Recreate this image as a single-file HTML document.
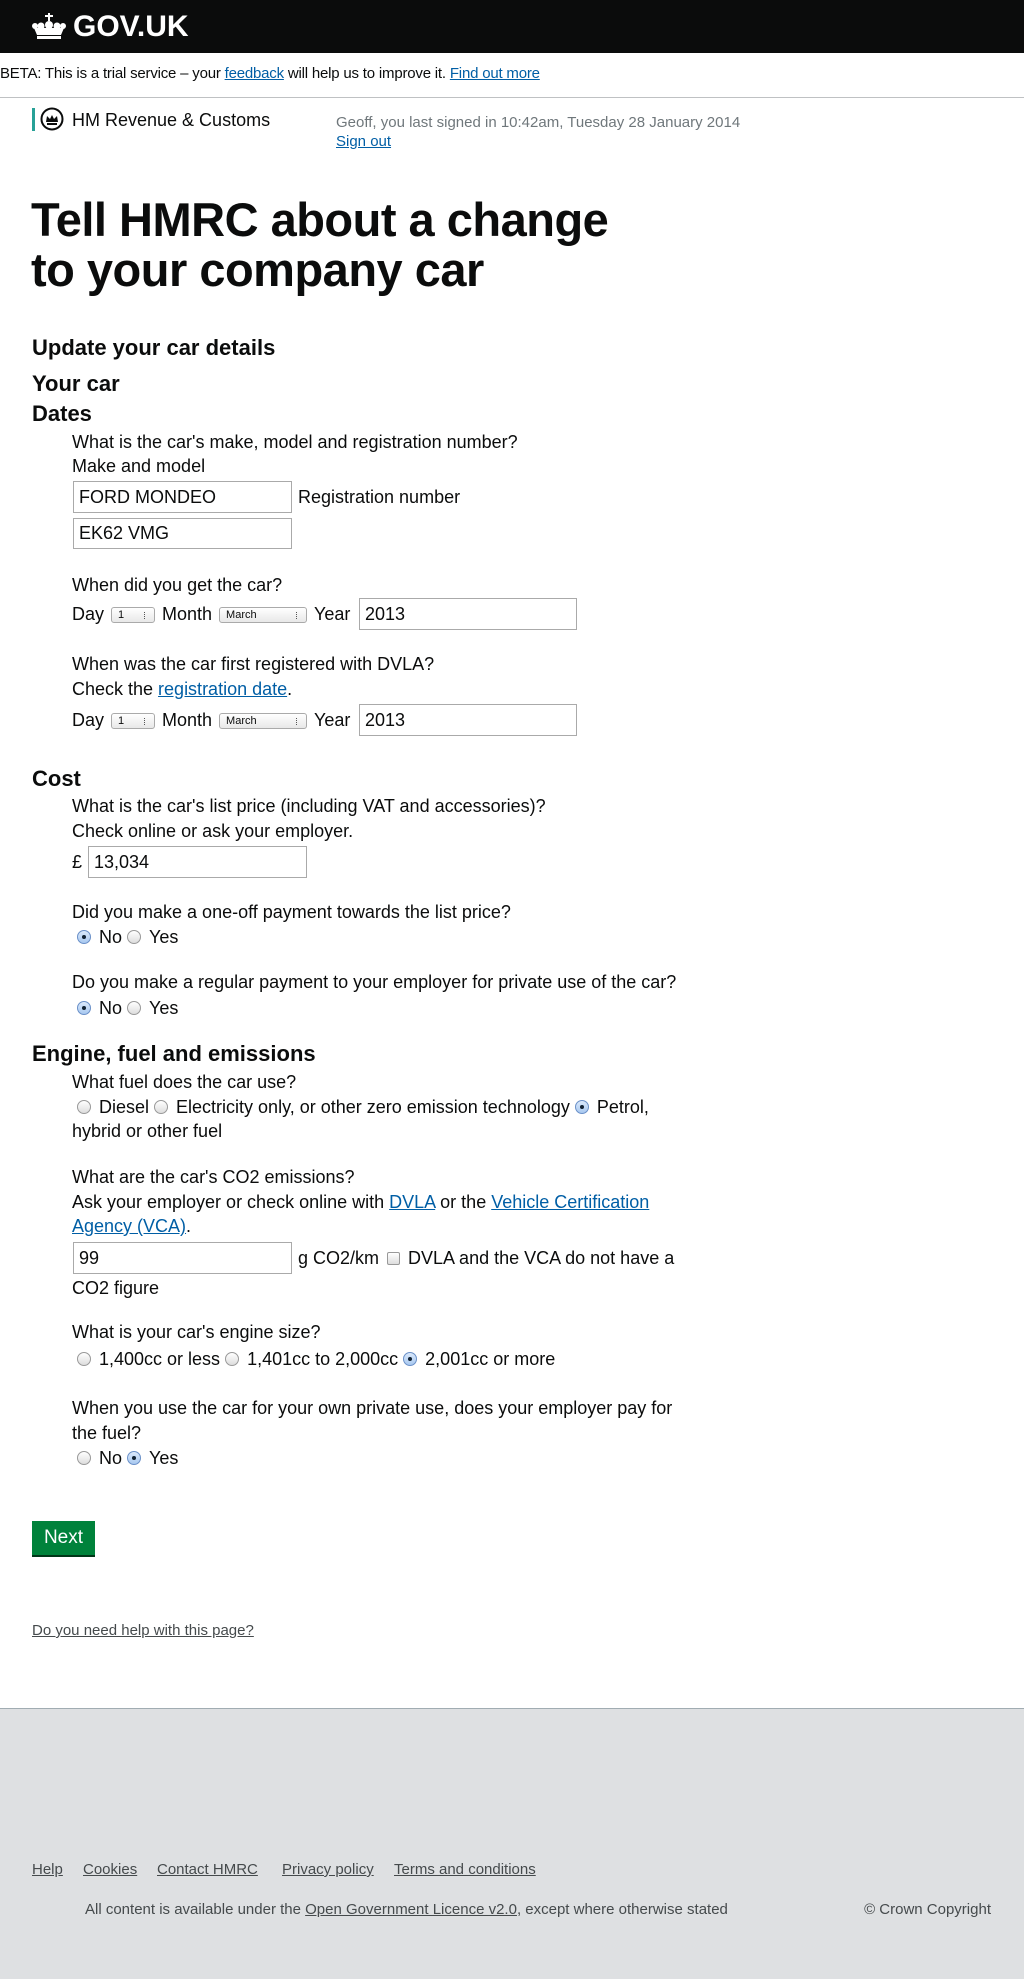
<!DOCTYPE html>
<html><head><meta charset="utf-8">
<style>
*{margin:0;padding:0;box-sizing:border-box}
body{width:1024px;height:1979px;position:relative;background:#fff;font-family:"Liberation Sans",sans-serif;color:#0b0c0c;font-size:18px;overflow:hidden}
.a{position:absolute;white-space:nowrap;line-height:25px}
a{color:#005ea5;text-decoration:underline}
.h2{font-weight:bold;font-size:22px}
.in{position:absolute;border:1px solid #aaa;background:#fff;font-size:18px;padding:0 5px;display:flex;align-items:center}
.sel{display:inline-block;vertical-align:middle;border:1px solid #aaa;border-radius:3px;background:linear-gradient(#fff,#e8e8e8);font-size:11px;height:16px;line-height:14px;padding-left:6px;position:relative;margin:0 7px}
.sel:after{content:"";position:absolute;right:6px;top:4px;width:3px;height:7px;border-left:1px dotted #555}
.r{display:inline-block;width:14px;height:14px;border:1px solid #999;border-radius:50%;background:linear-gradient(#fff,#ddd);vertical-align:-1px;margin:0 8px 0 5px;position:relative}
.r.on{border-color:#6a90c8;background:linear-gradient(#dbe9fb,#a8c8f0)}
.r.on:after{content:"";position:absolute;left:4px;top:4px;width:4px;height:4px;border-radius:50%;background:#123}
.cb{display:inline-block;width:13px;height:13px;border:1px solid #999;border-radius:2px;background:linear-gradient(#fff,#ddd);vertical-align:-1px;margin:0 8px}
.f{color:#454a4c;font-size:15px}
.f a{color:#454a4c}
</style></head><body>
<div style="position:absolute;left:0;top:0;width:1024px;height:53px;background:#0b0c0c"></div>
<svg style="position:absolute;left:32px;top:13px" width="34" height="26" viewBox="0 0 34 26" fill="#fff"><rect x="16" y="0" width="2" height="8"/><rect x="13" y="2" width="8" height="2"/><circle cx="17" cy="12" r="4"/><circle cx="9" cy="13" r="3.5"/><circle cx="25" cy="13" r="3.5"/><circle cx="3" cy="13" r="3"/><circle cx="31" cy="13" r="3"/><path d="M2 15 L32 15 L29 22 L5 22Z"/><rect x="5" y="23" width="24" height="3"/></svg>
<div class="a" style="left:73px;top:11px;color:#fff;font-weight:bold;font-size:30px;line-height:32px">GOV.UK</div>
<div class="a" style="left:0;top:61px;font-size:15px;letter-spacing:-0.2px">BETA: This is a trial service – your <a href="#">feedback</a> will help us to improve it. <a href="#">Find out more</a></div>
<div style="position:absolute;left:0;top:97px;width:1024px;height:1px;background:#bfc1c3"></div>
<div style="position:absolute;left:32px;top:108px;width:3px;height:23px;background:#28a197"></div>
<svg style="position:absolute;left:40px;top:107px" width="24" height="24" viewBox="0 0 24 24"><circle cx="12" cy="12" r="10.5" fill="none" stroke="#0b0c0c" stroke-width="2"/><path d="M6 15 L7 9 L10 12 L12 8 L14 12 L17 9 L18 15Z" fill="#0b0c0c"/><rect x="7" y="16" width="10" height="2" fill="#0b0c0c"/></svg>
<div class="a" style="left:72px;top:108px;font-size:18px">HM Revenue &amp; Customs</div>
<div class="a" style="left:336px;top:110px;font-size:15px;color:#6f777b">Geoff, you last signed in 10:42am, Tuesday 28 January 2014</div>
<div class="a" style="left:336px;top:129px;font-size:15px"><a href="#">Sign out</a></div>
<div class="a" style="left:31px;top:195px;font-size:47px;font-weight:bold;line-height:50px;letter-spacing:-0.5px">Tell HMRC about a change</div>
<div class="a" style="left:31px;top:245px;font-size:47px;font-weight:bold;line-height:50px;letter-spacing:-0.5px">to your company car</div>
<div class="a h2" style="left:32px;top:335px">Update your car details</div>
<div class="a h2" style="left:32px;top:371px">Your car</div>
<div class="a h2" style="left:32px;top:401px">Dates</div>
<div class="a" style="left:72px;top:430px">What is the car's make, model and registration number?</div>
<div class="a" style="left:72px;top:454px">Make and model</div>
<div class="in" style="left:73px;top:481px;width:219px;height:32px">FORD MONDEO</div>
<div class="a" style="left:298px;top:485px">Registration number</div>
<div class="in" style="left:73px;top:518px;width:219px;height:31px">EK62 VMG</div>
<div class="a" style="left:72px;top:573px">When did you get the car?</div>
<div class="a" style="left:72px;top:602px">Day<span class="sel" style="width:44px">1</span>Month<span class="sel" style="width:88px">March</span>Year</div>
<div class="in" style="left:359px;top:598px;width:218px;height:32px">2013</div>
<div class="a" style="left:72px;top:652px">When was the car first registered with DVLA?</div>
<div class="a" style="left:72px;top:677px">Check the <a href="#">registration date</a>.</div>
<div class="a" style="left:72px;top:708px">Day<span class="sel" style="width:44px">1</span>Month<span class="sel" style="width:88px">March</span>Year</div>
<div class="in" style="left:359px;top:704px;width:218px;height:32px">2013</div>
<div class="a h2" style="left:32px;top:766px">Cost</div>
<div class="a" style="left:72px;top:794px">What is the car's list price (including VAT and accessories)?</div>
<div class="a" style="left:72px;top:819px">Check online or ask your employer.</div>
<div class="a" style="left:72px;top:850px">£</div>
<div class="in" style="left:88px;top:846px;width:219px;height:32px">13,034</div>
<div class="a" style="left:72px;top:900px">Did you make a one-off payment towards the list price?</div>
<div class="a" style="left:72px;top:925px"><span class="r on"></span>No<span class="r"></span>Yes</div>
<div class="a" style="left:72px;top:970px">Do you make a regular payment to your employer for private use of the car?</div>
<div class="a" style="left:72px;top:996px"><span class="r on"></span>No<span class="r"></span>Yes</div>
<div class="a h2" style="left:32px;top:1041px">Engine, fuel and emissions</div>
<div class="a" style="left:72px;top:1070px">What fuel does the car use?</div>
<div class="a" style="left:72px;top:1095px"><span class="r"></span>Diesel<span class="r"></span>Electricity only, or other zero emission technology<span class="r on"></span>Petrol,</div>
<div class="a" style="left:72px;top:1119px">hybrid or other fuel</div>
<div class="a" style="left:72px;top:1165px">What are the car's CO2 emissions?</div>
<div class="a" style="left:72px;top:1190px">Ask your employer or check online with <a href="#">DVLA</a> or the <a href="#">Vehicle Certification</a></div>
<div class="a" style="left:72px;top:1214px"><a href="#">Agency (VCA)</a>.</div>
<div class="in" style="left:73px;top:1242px;width:219px;height:32px">99</div>
<div class="a" style="left:298px;top:1246px">g CO2/km<span class="cb"></span>DVLA and the VCA do not have a</div>
<div class="a" style="left:72px;top:1276px">CO2 figure</div>
<div class="a" style="left:72px;top:1320px">What is your car's engine size?</div>
<div class="a" style="left:72px;top:1347px"><span class="r"></span>1,400cc or less<span class="r"></span>1,401cc to 2,000cc<span class="r on"></span>2,001cc or more</div>
<div class="a" style="left:72px;top:1396px">When you use the car for your own private use, does your employer pay for</div>
<div class="a" style="left:72px;top:1421px">the fuel?</div>
<div class="a" style="left:72px;top:1446px"><span class="r"></span>No<span class="r on"></span>Yes</div>
<div style="position:absolute;left:32px;top:1521px;width:63px;height:34px;background:#00823b;box-shadow:0 2px 0 #003618;color:#fff;font-size:19px;line-height:34px;text-align:center">Next</div>
<div class="a f" style="left:32px;top:1618px"><a href="#">Do you need help with this page?</a></div>
<div style="position:absolute;left:0;top:1708px;width:1024px;height:271px;background:#dee0e2;border-top:1px solid #a1acb2"></div>
<div class="a f" style="left:32px;top:1857px"><a href="#">Help</a></div>
<div class="a f" style="left:83px;top:1857px"><a href="#">Cookies</a></div>
<div class="a f" style="left:157px;top:1857px"><a href="#">Contact HMRC</a></div>
<div class="a f" style="left:282px;top:1857px"><a href="#">Privacy policy</a></div>
<div class="a f" style="left:394px;top:1857px"><a href="#">Terms and conditions</a></div>
<div class="a f" style="left:85px;top:1897px">All content is available under the <a href="#">Open Government Licence v2.0</a>, except where otherwise stated</div>
<div class="a f" style="right:33px;top:1897px">© Crown Copyright</div>
</body></html>
